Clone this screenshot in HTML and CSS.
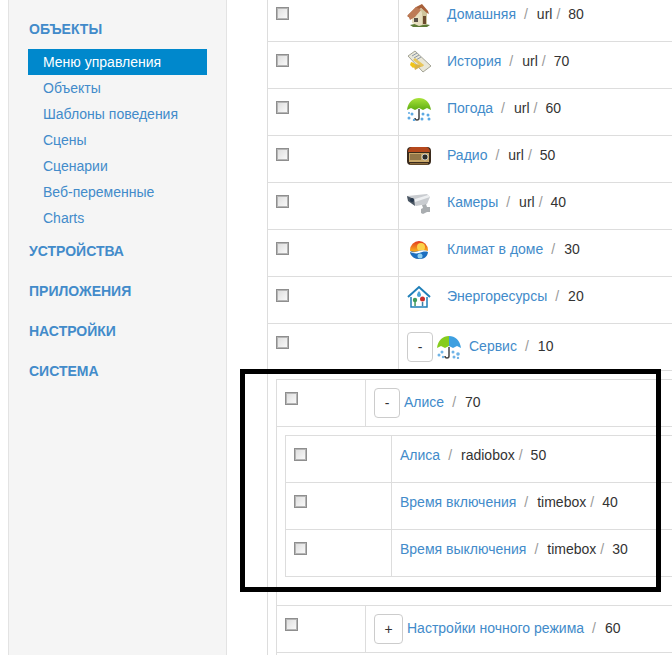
FILE: index.html
```html
<!DOCTYPE html>
<html lang="ru">
<head>
<meta charset="utf-8">
<title>Меню управления</title>
<link rel="stylesheet" href="styles.css">
</head>
<body>
<aside class="sidebar">
  <h4 class="nav-head nav-first">Объекты</h4>
  <ul class="nav">
    <li class="active"><a href="#">Меню управления</a></li>
    <li><a href="#">Объекты</a></li>
    <li><a href="#">Шаблоны поведения</a></li>
    <li><a href="#">Сцены</a></li>
    <li><a href="#">Сценарии</a></li>
    <li><a href="#">Веб-переменные</a></li>
    <li><a href="#">Charts</a></li>
  </ul>
  <h4 class="nav-head">Устройства</h4>
  <h4 class="nav-head">Приложения</h4>
  <h4 class="nav-head">Настройки</h4>
  <h4 class="nav-head">Система</h4>
</aside>
<main class="main">
  <div class="tree tree-outer">
    <div class="row">
      <div class="cell-check"><input type="checkbox" class="check"></div>
      <div class="cell-body">
        <svg class="icon" viewBox="0 0 24 24"><path d="M3 22l9-2 11 2-3 2H6z" fill="#5d7a35"/><path d="M5 11l8-6 7 4v12l-8 2-7-3z" fill="#e8dfc0"/><path d="M13 5l7 4v12l-5 1V10z" fill="#cfc59c"/><path d="M0 13l9-9 6-3 6 7 1 3-2-1-6-5-6 4-5 6z" fill="#a8603a"/><path d="M1 12l8-8 5 3-6 7-5 3z" fill="#bd7a55"/><rect x="16" y="13" width="3" height="8" fill="#6b4a2e"/><rect x="7" y="15" width="4" height="4" fill="#5a5148"/></svg>
        <span class="label label-icon"><a href="#">Домашняя</a><span class="sep">/</span>url<span class="sep2">/</span>80</span>
      </div>
    </div>
    <div class="row">
      <div class="cell-check"><input type="checkbox" class="check"></div>
      <div class="cell-body">
        <svg class="icon" viewBox="0 0 24 24"><path d="M1 6l7-5 16 15-8 6z" fill="#e9e7d8" stroke="#8f8f80" stroke-width=".8"/><path d="M5 6l5-3M7 8l5-3M9 10l5-3" stroke="#8b97a8" stroke-width="1"/><path d="M6 14l11 1-9 5z" fill="#d8b34a"/><path d="M4 12l3 1 2 3-3 2-3-3z" fill="#f0c419"/><path d="M8 8l9 7-2 2-9-7z" fill="#e8c65a"/></svg>
        <span class="label label-icon"><a href="#">История</a><span class="sep">/</span>url<span class="sep2">/</span>70</span>
      </div>
    </div>
    <div class="row">
      <div class="cell-check"><input type="checkbox" class="check"></div>
      <div class="cell-body">
        <svg class="icon" viewBox="0 0 24 24"><defs><linearGradient id="g1" x1="0" y1="0" x2="0" y2="1"><stop offset="0" stop-color="#a9e33a"/><stop offset="1" stop-color="#5fae12"/></linearGradient></defs><path d="M0 13C1 5 6 1 12 1s11 4 12 12l-4-2-4 2-4-2-4 2-4-2z" fill="url(#g1)"/><path d="M12 12v9a2 2 0 0 1-4 0" fill="none" stroke="#444" stroke-width="1.5"/><g fill="#5da9e3"><circle cx="2" cy="21" r="1.5"/><circle cx="5" cy="17" r="1.5"/><circle cx="7" cy="23" r="1.2"/><circle cx="16" cy="17" r="1.5"/><circle cx="15" cy="22" r="1.5"/><circle cx="21" cy="18" r="1.5"/><circle cx="22" cy="22" r="1.5"/><circle cx="2" cy="16" r="1"/></g></svg>
        <span class="label label-icon"><a href="#">Погода</a><span class="sep">/</span>url<span class="sep2">/</span>60</span>
      </div>
    </div>
    <div class="row">
      <div class="cell-check"><input type="checkbox" class="check"></div>
      <div class="cell-body">
        <svg class="icon" viewBox="0 0 24 24"><rect x="0" y="3" width="24" height="18" rx="4" fill="#3a2a1c"/><path d="M1 8c0-3 2-5 4-5h14c2 0 4 2 4 5z" fill="#b5481d"/><rect x="2" y="9" width="20" height="9" fill="#c9a86a"/><path d="M3 11h11M3 13h11M3 15h11" stroke="#5c4526"/><circle cx="18" cy="13" r="3" fill="#2b2b2b" stroke="#ddd" stroke-width=".8"/><rect x="3" y="19" width="18" height="1.5" fill="#8a6a3c"/></svg>
        <span class="label label-icon"><a href="#">Радио</a><span class="sep">/</span>url<span class="sep2">/</span>50</span>
      </div>
    </div>
    <div class="row">
      <div class="cell-check"><input type="checkbox" class="check"></div>
      <div class="cell-body">
        <svg class="icon" viewBox="0 0 24 24"><path d="M0 5l20-2 3 3-3 7-11 2L1 9z" fill="#c9ccd0"/><path d="M0 5l7 3 1 7-7-5z" fill="#4a5663"/><circle cx="5" cy="9" r="2" fill="#27384d"/><path d="M8 8l13-4 2 2-15 5z" fill="#eef0f2"/><path d="M15 14l4-1 1 3h3v5h-3l-4 2-2-1v-4l2-1z" fill="#a9adb0"/></svg>
        <span class="label label-icon"><a href="#">Камеры</a><span class="sep">/</span>url<span class="sep2">/</span>40</span>
      </div>
    </div>
    <div class="row">
      <div class="cell-check"><input type="checkbox" class="check"></div>
      <div class="cell-body">
        <svg class="icon" viewBox="0 0 24 24"><defs><linearGradient id="g2" x1="0" y1="0" x2="0" y2="1"><stop offset="0" stop-color="#e2371c"/><stop offset=".5" stop-color="#f6a11c"/></linearGradient></defs><circle cx="12" cy="12" r="9" fill="url(#g2)"/><circle cx="14" cy="9" r="4" fill="#fbd24a"/><path d="M3 13c3 1 5 1 9 0s6 0 9 0c0 6-4 8-9 8s-9-3-9-8z" fill="#1c6fc0"/><path d="M3 13c3 2 6 1 9 0s6-1 9 0v1c-3-1-6 0-9 1s-6 0-9-1z" fill="#fff"/><circle cx="13" cy="18" r="2.5" fill="#8fd0f0"/></svg>
        <span class="label label-icon"><a href="#">Климат в доме</a><span class="sep">/</span>30</span>
      </div>
    </div>
    <div class="row">
      <div class="cell-check"><input type="checkbox" class="check"></div>
      <div class="cell-body">
        <svg class="icon" viewBox="0 0 24 24"><path d="M1 12L12 2l11 10" fill="none" stroke="#1f7fb8" stroke-width="2"/><path d="M4 12v10h16V12" fill="none" stroke="#1f7fb8" stroke-width="1.5"/><path d="M12 6c-1.500 2-2 3-2 4a2 2 0 0 0 4 0c0-1-.5-2-2-4z" fill="#4aa3d8"/><circle cx="8" cy="15" r="2.200" fill="#3f9a5a"/><circle cx="15.500" cy="14" r="2.500" fill="#c9302c"/><rect x="7.300" y="17" width="1.500" height="4" fill="#3f9a5a"/><rect x="14.800" y="17" width="1.500" height="4" fill="#3f7fa8"/></svg>
        <span class="label label-icon"><a href="#">Энергоресурсы</a><span class="sep">/</span>20</span>
      </div>
    </div>
    <div class="row">
      <div class="cell-check"><input type="checkbox" class="check"></div>
      <div class="cell-body">
        <button class="toggle" type="button">-</button>
        <svg class="icon icon-inline" viewBox="0 0 24 24"><path d="M0 13C1 5 6 1 12 1v10l-4 2-4-2z" fill="#86cc1d"/><path d="M24 13C23 5 18 1 12 1v10l4 2 4-2z" fill="#3d9fe0"/><path d="M12 12v9a2 2 0 0 1-4 0" fill="none" stroke="#444" stroke-width="1.500"/><g fill="#6fb3e6"><circle cx="2" cy="20" r="1.500"/><circle cx="5" cy="17" r="1.500"/><circle cx="6" cy="22" r="1.200"/><circle cx="16" cy="17" r="1.500"/><circle cx="17" cy="22" r="1.500"/><circle cx="21" cy="19" r="1.800"/><circle cx="21" cy="23" r="1.200"/></g></svg>
        <span class="label label-toggle"><a href="#">Сервис</a><span class="sep">/</span>10</span>
      </div>
    </div>
    <div class="row-nested">
      <div class="tree">
        <div class="row">
          <div class="cell-check cell-check-mid"><input type="checkbox" class="check"></div>
          <div class="cell-body">
            <button class="toggle" type="button">-</button>
            <span class="label label-toggle"><a href="#">Алисе</a><span class="sep">/</span>70</span>
          </div>
        </div>
        <div class="row-nested">
          <div class="tree tree-inner">
            <div class="row">
              <div class="cell-check cell-check-small"><input type="checkbox" class="check"></div>
              <div class="cell-body"><span class="label"><a href="#">Алиса</a><span class="sep">/</span>radiobox<span class="sep2">/</span>50</span></div>
            </div>
            <div class="row">
              <div class="cell-check cell-check-small"><input type="checkbox" class="check"></div>
              <div class="cell-body"><span class="label"><a href="#">Время включения</a><span class="sep">/</span>timebox<span class="sep2">/</span>40</span></div>
            </div>
            <div class="row">
              <div class="cell-check cell-check-small"><input type="checkbox" class="check"></div>
              <div class="cell-body"><span class="label"><a href="#">Время выключения</a><span class="sep">/</span>timebox<span class="sep2">/</span>30</span></div>
            </div>
          </div>
        </div>
        <div class="row">
          <div class="cell-check cell-check-mid"><input type="checkbox" class="check"></div>
          <div class="cell-body">
            <button class="toggle toggle-plus" type="button">+</button>
            <span class="label label-toggle"><a href="#">Настройки ночного режима</a><span class="sep">/</span>60</span>
          </div>
        </div>
        <div class="row"></div>
      </div>
    </div>
  </div>
</main>
<div class="annotation"></div>
</body>
</html>
```

FILE: styles.css
```css
* { box-sizing: border-box; }
html, body { height: 100%; }
body {
  margin: 0;
  display: flex;
  height: 655px;
  overflow: hidden;
  background: #fff;
  font-family: "Liberation Sans", Arial, sans-serif;
  font-size: 14px;
  line-height: 20px;
  color: #333;
}
a { color: #428bca; text-decoration: none; }

.sidebar {
  flex: none;
  width: 219px;
  margin-left: 8px;
  padding: 9px 19px 0;
  background: #f5f5f5;
  border-left: 1px solid #e3e3e3;
  border-right: 1px solid #e3e3e3;
}
.nav-head {
  margin: 0;
  padding: 10px 0 10px 1px;
  font-size: 14px;
  line-height: 20px;
  font-weight: bold;
  text-transform: uppercase;
  color: #428bca;
}
.nav { list-style: none; margin: 0; padding: 0; }
.nav li { height: 26px; }
.nav a { display: block; padding: 3px 15px; }
.nav .active a { background: #0088cc; color: #fff; }

.main {
  flex: 1;
  min-width: 0;
  height: 655px;
  overflow: hidden;
  padding-left: 40px;
}
.tree { border-left: 1px solid #ddd; }
.tree-outer { margin-top: -6px; }
.row {
  display: flex;
  height: 47px;
  border-top: 1px solid #ddd;
}
.row-nested {
  padding: 8px 0 8px 8px;
  border-top: 1px solid #ddd;
  margin-left: 0;
}
.row-nested:last-child { padding-bottom: 0; }
.tree-inner { margin-bottom: 20px; border-bottom: 1px solid #ddd; }
.cell-check {
  flex: none;
  width: 131px;
  padding: 12px 0 0 8px;
  border-right: 1px solid #ddd;
}
.cell-check-mid { width: 89px; }
.cell-check-small { width: 106px; }
.cell-body {
  flex: 1;
  min-width: 0;
  display: flex;
  align-items: flex-start;
  padding: 8px;
  white-space: nowrap;
}
.check {
  appearance: none;
  display: block;
  width: 13px;
  height: 13px;
  margin: 0;
  border: 1px solid #8e8e8e;
  outline: 1px solid #b5b5b5;
  outline-offset: -2px;
  background: linear-gradient(135deg, #dcdcdc, #fbfbfb);
}
.icon { flex: none; width: 24px; height: 24px; }
.icon-inline { margin: 3px 4px 0; }
.toggle {
  flex: none;
  width: 26px;
  height: 30px;
  padding: 0;
  font: 14px/20px "Liberation Sans", Arial, sans-serif;
  color: #333;
  background: #fff;
  border: 1px solid #ccc;
  border-radius: 4px;
}
.toggle-plus { width: 29px; }
.label { display: block; padding-top: 1px; }
.label-icon { margin-left: 16px; }
.label-toggle { padding-top: 4px; margin-left: 4px; }
.sep { margin: 0 9px 0 8px; color: #999; }
.sep2 { margin: 0 8px 0 4px; color: #999; }

.annotation {
  position: absolute;
  left: 240px;
  top: 369px;
  width: 421px;
  height: 223px;
  border: 5px solid #000;
  pointer-events: none;
}
```
